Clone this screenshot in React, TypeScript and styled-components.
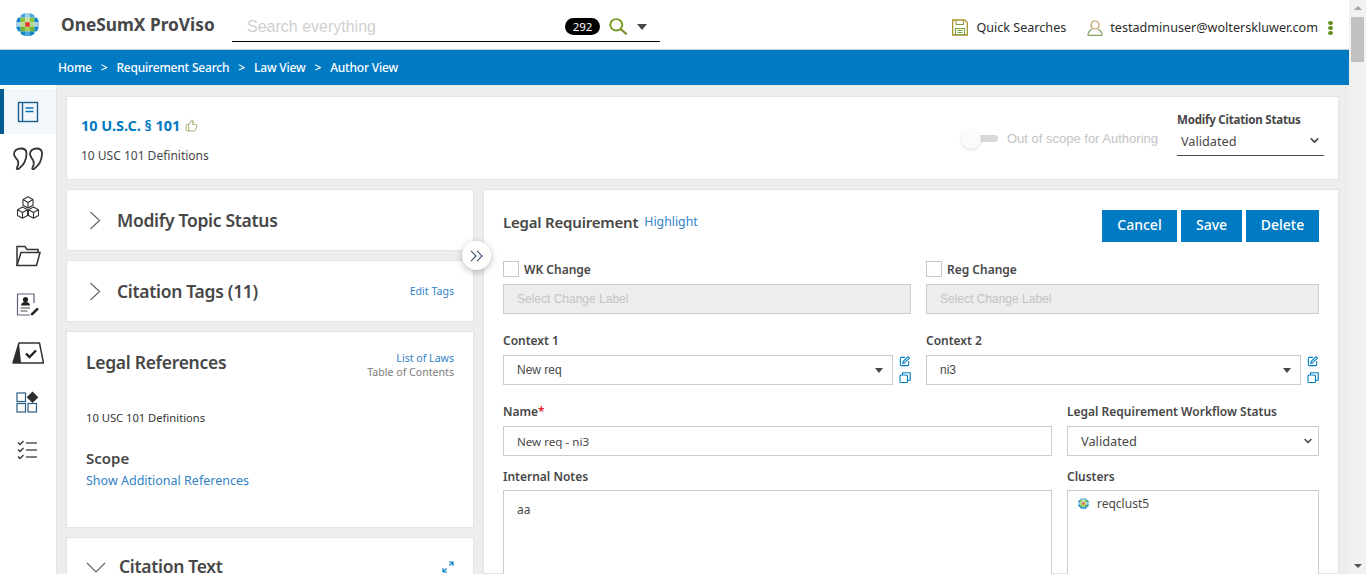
import * as React from 'react';
import styled, { createGlobalStyle } from 'styled-components';
import { ChevronDown, ThumbsUp, SquarePen } from 'lucide-react';

const GlobalStyle = createGlobalStyle`
html, body {
    margin: 0;
    height: 574px;
    overflow: hidden;
    background: #fff;
}
* { box-sizing: border-box; }
`

const UI_FONT = `"Noto Sans", "Open Sans", sans-serif`;
const ARIAL = `"Liberation Sans", Arial, sans-serif`;
const BLUE = '#007ac3';
const INK = '#474747';
const LINK = '#2f82c6';

const Frame = styled.div`
display: flex;
width: 1366px;
height: 574px;
overflow: hidden;
font-family: ${UI_FONT};
color: ${INK};
`

const Page = styled.div`
width: 1349px;
height: 574px;
display: flex;
flex-direction: column;
overflow: hidden;
`

const ScrollTrack = styled.div`
width: 17px;
height: 574px;
background: #f1f1f1;
display: flex;
flex-direction: column;
align-items: center;
padding-top: 6px;
`

const ScrollUp = styled.div`
width: 0;
height: 0;
border-left: 4px solid transparent;
border-right: 4px solid transparent;
border-bottom: 4px solid #a3a3a3;
`

const ScrollThumb = styled.div`
width: 13px;
height: 45px;
margin-top: 7px;
background: #c1c1c1;
`

const ScrollDown = styled.div`
width: 0;
height: 0;
margin-top: auto;
margin-bottom: 6px;
border-left: 4px solid transparent;
border-right: 4px solid transparent;
border-top: 4px solid #505050;
`

const TopBar = styled.header`
height: 50px;
flex: none;
background: #fff;
border-bottom: 1px solid #c8d0d6;
display: flex;
align-items: center;
padding-left: 16px;
`

const Brand = styled.div`
margin-left: 22px;
width: 171px;
font-size: 17.3px;
font-weight: 700;
color: ${INK};
white-space: nowrap;
`

const SearchBox = styled.div`
width: 428px;
height: 33px;
margin-top: 2px;
display: flex;
align-items: center;
border-bottom: 1px solid #000;
padding: 3px 0 0 15px;
`

const SearchHint = styled.span`
font-family: ${ARIAL};
font-size: 16px;
color: #cfcfcf;
flex: 1;
`

const CountBadge = styled.span`
width: 35px;
height: 17px;
border-radius: 9px;
background: #000;
color: #fff;
font-size: 11.5px;
line-height: 17px;
text-align: center;
`

const SearchIconWrap = styled.span`
display: flex;
margin-left: 9px;
`

const SearchCaret = styled.span`
width: 0;
height: 0;
margin: 0 13px 0 9px;
border-left: 5px solid transparent;
border-right: 5px solid transparent;
border-top: 6px solid #474747;
`

const TopActions = styled.div`
margin-left: auto;
display: flex;
align-items: center;
padding: 6px 16px 0 0;
font-size: 12.6px;
color: #2b2b2b;
`

const TopLink = styled.span<{ $gap?: number; $space: number }>`
display: flex;
align-items: center;
gap: ${p => p.$space}px;
margin-right: ${p => p.$gap ?? 0}px;
white-space: nowrap;
`

const KebabDot = styled.i`
display: block;
width: 5px;
height: 4px;
border-radius: 50%;
background: #5f8f1e;
`

const Kebab = styled.span`
display: flex;
flex-direction: column;
gap: 1px;
margin-left: 10px;
`

const Crumbs = styled.nav`
height: 35px;
flex: none;
background: ${BLUE};
color: #fff;
display: flex;
align-items: center;
padding-left: 58px;
font-size: 12px;
font-weight: 500;
letter-spacing: -0.2px;
white-space: nowrap;
`

const CrumbSep = styled.span`
margin: 0 9px;
`

const Body = styled.div`
flex: 1;
min-height: 0;
display: flex;
background: #ededed;
`

const Sidebar = styled.aside`
width: 57px;
flex: none;
background: #fff;
border-right: 1px solid #e4e4e4;
padding-top: 4px;
`

const SideItem = styled.div`
height: 48.5px;
display: flex;
align-items: center;
justify-content: center;
padding-right: 1px;
color: #333;
`

const ActiveSideItem = styled(SideItem)`
height: 45px;
margin-bottom: 1px;
background: #f2f7fb;
border-left: 4px solid #005b92;
padding-right: 5px;
`

const Content = styled.main`
flex: 1;
min-width: 0;
padding: 11px 10px 0 9px;
display: flex;
flex-direction: column;
gap: 9px;
overflow: hidden;
`

const Card = styled.section`
background: #fff;
border: 1px solid #e3e3e3;
`

const CitationCard = styled(Card)`
height: 84px;
flex: none;
display: flex;
padding: 18px 14px 0 14px;
`

const CitationInfo = styled.div`
flex: 1;
`

const CitationTitle = styled.div`
display: flex;
align-items: center;
gap: 5px;
font-size: 14.5px;
line-height: 20px;
font-weight: 700;
color: ${BLUE};
`

const CitationSub = styled.div`
margin-top: 12px;
font-size: 12px;
line-height: 18px;
color: #474747;
`

const ScopeToggle = styled.div`
display: flex;
align-items: center;
height: 46px;
font-family: ${ARIAL};
font-size: 13px;
color: #c4c4c4;
margin-right: 19px;
`

const ToggleTrack = styled.span`
position: relative;
display: block;
width: 26px;
height: 7px;
border-radius: 4px;
background: #d8d8d8;
margin-right: 9px;
`

const ToggleKnob = styled.span`
position: absolute;
left: -11px;
top: -6px;
width: 20px;
height: 20px;
border-radius: 50%;
background: #fbfbfb;
box-shadow: 0 1px 3px rgba(0, 0, 0, 0.15);
`

const StatusField = styled.div`
width: 147px;
margin-top: -3px;
`

const StatusLabel = styled.div`
font-size: 11.5px;
line-height: 16px;
font-weight: 700;
letter-spacing: -0.2px;
color: ${INK};
white-space: nowrap;
`

const StatusSelect = styled.div`
height: 28px;
display: flex;
align-items: center;
justify-content: space-between;
padding: 0 3px 2px 4px;
border-bottom: 1px solid #474b52;
font-size: 12.7px;
color: #474747;
`

const Columns = styled.div`
position: relative;
display: flex;
gap: 9px;
flex: 1;
min-height: 0;
`

const LeftCol = styled.div`
width: 408px;
flex: none;
display: flex;
flex-direction: column;
gap: 9px;
`

const Fold = styled(Card)`
height: 62px;
flex: none;
display: flex;
align-items: center;
padding: 0 19px 0 22px;
`

const FoldTitle = styled.h2`
margin: 0 0 0 16px;
flex: 1;
font-size: 17.5px;
font-weight: 600;
color: ${INK};
letter-spacing: -0.3px;
`

const SmallLink = styled.a<{ $muted?: boolean }>`
display: block;
font-size: 10.6px;
line-height: 14px;
color: ${p => (p.$muted ? '#7c7c7c' : LINK)};
text-align: right;
`

const RefsCard = styled(Card)`
height: 197px;
flex: none;
padding: 18px 19px 0 19px;
`

const RefsHead = styled.div`
display: flex;
justify-content: space-between;
`

const RefsLinks = styled.div`
margin-top: 1px;
`

const RefsTitle = styled.h2`
margin: 0;
font-size: 17.5px;
line-height: 24px;
font-weight: 600;
color: ${INK};
letter-spacing: -0.3px;
`

const RefsBody = styled.div`
margin-top: 30px;
font-size: 11.2px;
line-height: 18px;
color: #333;
`

const ScopeTitle = styled.h3`
margin: 21px 0 0;
font-size: 15px;
line-height: 20px;
font-weight: 600;
color: ${INK};
`

const ScopeLink = styled.a`
display: block;
margin-top: 4px;
font-size: 12.5px;
line-height: 18px;
color: ${LINK};
`

const TextCard = styled(Card)`
flex: 1;
min-height: 60px;
display: flex;
align-items: flex-start;
padding: 14px 19px 0 19px;
`

const TextChevron = styled.svg`
flex: none;
margin-top: 10px;
`

const ExpandIcon = styled.svg`
flex: none;
margin-top: 9px;
`

const TextTitle = styled.h2`
margin: 0 0 0 13px;
flex: 1;
font-size: 17.5px;
line-height: 28px;
font-weight: 600;
color: ${INK};
letter-spacing: -0.3px;
`

const CollapseBtn = styled.button`
position: absolute;
left: 396px;
top: 52px;
width: 29px;
height: 29px;
padding: 0;
display: flex;
align-items: center;
justify-content: center;
border: none;
border-radius: 50%;
background: #fff;
box-shadow: 0 2px 7px rgba(0, 0, 0, 0.25);
`

const FormCard = styled(Card)`
flex: 1;
min-width: 0;
padding: 20px 19px 0 19px;
`

const FormHead = styled.div`
display: flex;
align-items: flex-start;
height: 51px;
`

const FormTitle = styled.h2`
margin: 2px 6px 0 0;
font-size: 15px;
line-height: 20px;
font-weight: 600;
color: ${INK};
letter-spacing: -0.2px;
`

const HighlightLink = styled.a`
margin-top: 2px;
font-size: 12.3px;
line-height: 20px;
color: ${LINK};
`

const Actions = styled.div`
margin-left: auto;
display: flex;
gap: 4px;
`

const ActionButton = styled.button<{ $w: number }>`
width: ${p => p.$w}px;
height: 32px;
padding: 0 0 3px;
border: none;
background: ${BLUE};
color: #fff;
font-family: ${UI_FONT};
font-size: 14px;
font-weight: 500;
`

const Grid = styled.div<{ $cols: string; $mb?: number }>`
display: grid;
grid-template-columns: ${p => p.$cols};
column-gap: 15px;
margin-bottom: ${p => p.$mb ?? 0}px;
`

const CheckRow = styled.label`
display: flex;
align-items: center;
gap: 5px;
height: 16px;
margin-bottom: 7px;
font-size: 12px;
font-weight: 600;
color: ${INK};
`

const CheckBox = styled.span`
width: 16px;
height: 16px;
border: 1px solid #c8c8c8;
background: #fff;
`

const DisabledSelect = styled.div`
height: 30px;
display: flex;
align-items: center;
padding-left: 13px;
background: #ededed;
border: 1px solid #cccccc;
font-family: ${ARIAL};
font-size: 12px;
color: #c4c4c4;
`

const FieldLabel = styled.div<{ $below?: number }>`
height: 15px;
line-height: 15px;
margin-bottom: ${p => p.$below ?? 7}px;
font-size: 12px;
font-weight: 600;
color: ${INK};
white-space: nowrap;
`

const Star = styled.span`
color: #e5202e;
`

const SelectRow = styled.div`
display: flex;
gap: 6px;
`

const InputBox = styled.div<{ $font?: string; $size?: number; $right?: number }>`
flex: 1;
height: 30px;
display: flex;
align-items: center;
justify-content: space-between;
padding: 0 ${p => p.$right ?? 8}px 0 13px;
border: 1px solid #cccccc;
background: #fff;
font-family: ${p => p.$font ?? UI_FONT};
font-size: ${p => p.$size ?? 12}px;
color: #474747;
`

const DownTriangle = styled.span`
width: 0;
height: 0;
margin-right: 1px;
border-left: 4px solid transparent;
border-right: 4px solid transparent;
border-top: 5px solid #474747;
`

const RowTools = styled.div`
width: 12px;
display: flex;
flex-direction: column;
gap: 5px;
padding-top: 1px;
color: ${BLUE};
`

const AreaBox = styled.div`
height: 120px;
padding: 11px 13px;
border: 1px solid #cccccc;
background: #fff;
font-size: 12px;
line-height: 16px;
color: #474747;
`

const ClusterItem = styled.div`
display: flex;
align-items: center;
gap: 8px;
height: 24px;
padding-left: 10px;
font-size: 12px;
color: #474747;
`

const ClusterBox = styled.div`
height: 120px;
border: 1px solid #cccccc;
background: #fff;
`

const GLOBE_CELLS: [number, number, string][] = [
    [1, 0, '#4aa5d8'], [2, 0, '#9fd0ea'], [3, 0, '#4aa5d8'],
    [0, 1, '#0f87c9'], [1, 1, '#8cc63f'], [2, 1, '#c9e2a0'], [3, 1, '#8cc63f'], [4, 1, '#0f87c9'],
    [0, 2, '#a9cfe0'], [1, 2, '#b7d98a'], [2, 2, '#e8362d'], [3, 2, '#b7d98a'], [4, 2, '#a9cfe0'],
    [0, 3, '#0f87c9'], [1, 3, '#75b62f'], [2, 3, '#a5d060'], [3, 3, '#75b62f'], [4, 3, '#0f87c9'],
    [1, 4, '#0f87c9'], [2, 4, '#4aa5d8'], [3, 4, '#0f87c9'],
];

function Globe({ size, id }: { size: number; id: string }) {
    return <svg width={size} height={size} viewBox="0 0 23 23">
        <defs>
            <clipPath id={id}><circle cx="11.500" cy="11.500" r="11.500" /></clipPath>
        </defs>
        <g clipPath={`url(#${id})`}>
            {GLOBE_CELLS.map(([x, y, fill]) => <rect key={`${x}-${y}`} x={x * 4.6} y={y * 4.6} width="4.7" height="4.7" fill={fill} />)}
        </g>
    </svg>
}

function SearchGlyph() {
    return <svg width="19" height="17" viewBox="0 0 19 17" fill="none" strokeWidth="1.900">
        <ellipse cx="7.300" cy="6.800" rx="6" ry="5.700" stroke="#6f9a1f" />
        <path d="M11.500 11 17.800 16.300" stroke="#7a8f22" strokeWidth="2.200" />
    </svg>
}

function SaveGlyph() {
    return <svg width="16" height="17" viewBox="0 0 16 17" fill="none">
        <path d="M.7 1h12l2.600 2.600V16H.7z" stroke="#a8952a" strokeWidth="1.300" />
        <path d="M4 1.500v4h7.500v-4" stroke="#8a9a3a" strokeWidth="1.100" />
        <path d="M3.500 9.500h9v6h-9zM5.500 11.500h5M5.500 13.500h5" stroke="#7fa63c" strokeWidth="1.100" />
    </svg>
}

function UserGlyph() {
    return <svg width="16" height="16" viewBox="0 0 16 16" fill="none" strokeWidth="1.200">
        <circle cx="8" cy="5" r="4" stroke="#b89a5a" />
        <path d="M.8 15.400c.4-3.400 2.400-5.400 4.200-6.200M15.200 15.400c-.4-3.400-2.400-5.400-4.200-6.200M.8 15.400h14.400" stroke="#7fa05a" />
    </svg>
}

function RightChevron() {
    return <svg width="12" height="19" viewBox="0 0 12 19" fill="none" stroke="#666" strokeWidth="1.200">
        <path d="M1.500 1 10.500 9.500 1.500 18" />
    </svg>
}

function BookIcon() {
    return <svg width="22" height="22" viewBox="0 0 22 22" fill="none" stroke="#1d5f8c" strokeWidth="1.400">
        <rect x="1.500" y="1.500" width="19" height="19" />
        <path d="M5.500 1.500v19" />
        <path d="M8.500 7h8M8.500 10.500h8" strokeWidth="1.600" stroke="#0a74b8" />
    </svg>
}

function QuoteIcon() {
    return <svg width="30" height="24" viewBox="0 0 30 24" fill="none" stroke="#333" strokeWidth="1.800">
        <path d="M8 1.500c3.500 0 5.500 2.200 5.500 5 0 6-3.200 12-8 15.500-1.600.6-2.200-.5-1.500-1.600 1.400-2.400 1.700-5 .6-7.200C2.500 11 1 9 1 6.800 1 3.800 4 1.500 8 1.500z" />
        <path d="M23.500 1.500c3.500 0 5.500 2.200 5.500 5 0 6-3.200 12-8 15.500-1.600.6-2.200-.5-1.500-1.600 1.400-2.400 1.700-5 .6-7.200-1.600-2.200-3.100-4.200-3.100-6.400 0-3 3-5.300 6.500-5.300z" />
    </svg>
}

function CubesIcon() {
    const cube = 'M0 2.800 5 0l5 2.800v5.600L5 11.200 0 8.400zM0 2.800l5 2.800 5-2.800M5 5.600v5.600';
    return <svg width="24" height="23" viewBox="0 0 24 23" fill="none" stroke="#333" strokeWidth="1.100" strokeLinejoin="round">
        <path d={cube} transform="translate(7 .8)" />
        <path d={cube} transform="translate(1.500 11)" />
        <path d={cube} transform="translate(12.500 11)" />
    </svg>
}

function FolderIcon() {
    return <svg width="26" height="22" viewBox="0 0 26 22" fill="none" stroke="#333" strokeWidth="1.500">
        <path d="M2 20.500V1.500h8l2 3h11v3" />
        <path d="M2 20.500 6 7.500h19l-3.500 13z" />
    </svg>
}

function ProfileIcon() {
    return <svg width="24" height="23" viewBox="0 0 24 23" fill="none">
        <path d="M18 10V1H1.500v21H14" stroke="#6b5a7a" strokeWidth="1.200" />
        <circle cx="9.500" cy="6.500" r="2.600" fill="#222" />
        <path d="M5 12.500c0-2.500 2-3.500 4.500-3.500s4.500 1 4.500 3.500z" fill="#222" />
        <path d="M4.500 15h9.500M4.500 18h7" stroke="#888" strokeWidth="1.300" />
        <path d="M15 20.500l6-6 1.800 1.800-6 6h-2z" fill="#222" />
    </svg>
}

function BoardIcon() {
    return <svg width="32" height="24" viewBox="0 0 32 24">
        <path d="M7 2h20.500L31.500 22H1z" fill="#fff" stroke="#333" strokeWidth="1.500" strokeLinejoin="round" />
        <path d="M7 2 1 22h8z" fill="#2d2d2d" />
        <path d="M14 12.500l3.500 3.500 6.500-6.500" fill="none" stroke="#222" strokeWidth="2.400" />
    </svg>
}

function TilesIcon() {
    return <svg width="23" height="22" viewBox="0 0 23 22" fill="none" stroke="#555" strokeWidth="1.200">
        <rect x="1" y="2" width="8.500" height="8.500" stroke="#2c5f86" />
        <rect x="1" y="12.500" width="8.500" height="8.500" stroke="#2c5f86" />
        <rect x="12" y="12.500" width="8.500" height="8.500" stroke="#2c5f86" />
        <path d="M16.500.5l5.800 5.800-5.800 5.800-5.800-5.800z" fill="#2d2d2d" stroke="none" />
    </svg>
}

function ChecklistIcon() {
    return <svg width="21" height="20" viewBox="0 0 21 20" fill="none" stroke="#333" strokeWidth="1.300">
        <path d="M1 2.500 3 4.500 6.500 1M1 9.500 3 11.500 6.500 8M1 16.500 3 18.500 6.500 15" />
        <path d="M9 3h11M9 10h11M9 17h11" stroke="#555" strokeWidth="1.500" />
    </svg>
}

function ToolIcons() {
    return <RowTools>
        <SquarePen size={11} strokeWidth={2.400} />
        <svg width="12" height="11" viewBox="0 0 12 11" fill="none" stroke="currentColor" strokeWidth="1.100">
            <rect x="1" y="3" width="7.500" height="7.500" rx="1" />
            <path d="M3.500 3V.8h7.700v7.400H8.500" />
        </svg>
    </RowTools>
}

export default function App() {
    return <Frame>
        <GlobalStyle />
        <Page>
            <TopBar>
                <Globe size={23} id="brand-globe" />
                <Brand>OneSumX ProViso</Brand>
                <SearchBox>
                    <SearchHint>Search everything</SearchHint>
                    <CountBadge>292</CountBadge>
                    <SearchIconWrap><SearchGlyph /></SearchIconWrap>
                    <SearchCaret />
                </SearchBox>
                <TopActions>
                    <TopLink $gap={21} $space={8}>
                        <SaveGlyph />
                        Quick Searches
                    </TopLink>
                    <TopLink $space={7}>
                        <UserGlyph />
                        testadminuser@wolterskluwer.com
                    </TopLink>
                    <Kebab><KebabDot /><KebabDot /><KebabDot /></Kebab>
                </TopActions>
            </TopBar>
            <Crumbs>
                Home<CrumbSep>&gt;</CrumbSep>Requirement Search<CrumbSep>&gt;</CrumbSep>Law View<CrumbSep>&gt;</CrumbSep>Author View
            </Crumbs>
            <Body>
                <Sidebar>
                    <ActiveSideItem><BookIcon /></ActiveSideItem>
                    <SideItem><QuoteIcon /></SideItem>
                    <SideItem><CubesIcon /></SideItem>
                    <SideItem><FolderIcon /></SideItem>
                    <SideItem><ProfileIcon /></SideItem>
                    <SideItem><BoardIcon /></SideItem>
                    <SideItem><TilesIcon /></SideItem>
                    <SideItem><ChecklistIcon /></SideItem>
                </Sidebar>
                <Content>
                    <CitationCard>
                        <CitationInfo>
                            <CitationTitle>10 U.S.C. § 101 <ThumbsUp size={13} color="#8a9a4a" strokeWidth={1.400} /></CitationTitle>
                            <CitationSub>10 USC 101 Definitions</CitationSub>
                        </CitationInfo>
                        <ScopeToggle>
                            <ToggleTrack><ToggleKnob /></ToggleTrack>
                            Out of scope for Authoring
                        </ScopeToggle>
                        <StatusField>
                            <StatusLabel>Modify Citation Status</StatusLabel>
                            <StatusSelect>Validated <ChevronDown size={13} strokeWidth={3} /></StatusSelect>
                        </StatusField>
                    </CitationCard>
                    <Columns>
                        <LeftCol>
                            <Fold>
                                <RightChevron />
                                <FoldTitle>Modify Topic Status</FoldTitle>
                            </Fold>
                            <Fold>
                                <RightChevron />
                                <FoldTitle>Citation Tags (11)</FoldTitle>
                                <SmallLink>Edit Tags</SmallLink>
                            </Fold>
                            <RefsCard>
                                <RefsHead>
                                    <RefsTitle>Legal References</RefsTitle>
                                    <RefsLinks>
                                        <SmallLink>List of Laws</SmallLink>
                                        <SmallLink $muted>Table of Contents</SmallLink>
                                    </RefsLinks>
                                </RefsHead>
                                <RefsBody>10 USC 101 Definitions</RefsBody>
                                <ScopeTitle>Scope</ScopeTitle>
                                <ScopeLink>Show Additional References</ScopeLink>
                            </RefsCard>
                            <TextCard>
                                <TextChevron width="20" height="11" viewBox="0 0 20 11" fill="none" stroke="#666" strokeWidth="1.200">
                                    <path d="M1 1 10 10 19 1" />
                                </TextChevron>
                                <TextTitle>Citation Text</TextTitle>
                                <ExpandIcon width="12" height="12" viewBox="0 0 12 12" fill="none" stroke={BLUE} strokeWidth="1.100">
                                    <path d="M7 1h4v4M11 1 7.500 4.500M5 11H1V7M1 11l3.500-3.500" />
                                </ExpandIcon>
                            </TextCard>
                        </LeftCol>
                        <CollapseBtn>
                            <svg width="13" height="12" viewBox="0 0 13 12" fill="none" stroke="#34506f" strokeWidth="1.100">
                                <path d="M1 .8 6 6 1 11.200M7 .8 12 6 7 11.200" />
                            </svg>
                        </CollapseBtn>
                        <FormCard>
                            <FormHead>
                                <FormTitle>Legal Requirement</FormTitle>
                                <HighlightLink>Highlight</HighlightLink>
                                <Actions>
                                    <ActionButton $w={75}>Cancel</ActionButton>
                                    <ActionButton $w={61}>Save</ActionButton>
                                    <ActionButton $w={73}>Delete</ActionButton>
                                </Actions>
                            </FormHead>
                            <Grid $cols="408px 393px" $mb={19}>
                                <div>
                                    <CheckRow><CheckBox />WK Change</CheckRow>
                                    <DisabledSelect>Select Change Label</DisabledSelect>
                                </div>
                                <div>
                                    <CheckRow><CheckBox />Reg Change</CheckRow>
                                    <DisabledSelect>Select Change Label</DisabledSelect>
                                </div>
                            </Grid>
                            <Grid $cols="408px 393px" $mb={19}>
                                <div>
                                    <FieldLabel>Context 1</FieldLabel>
                                    <SelectRow>
                                        <InputBox $font={ARIAL}>New req<DownTriangle /></InputBox>
                                        <ToolIcons />
                                    </SelectRow>
                                </div>
                                <div>
                                    <FieldLabel>Context 2</FieldLabel>
                                    <SelectRow>
                                        <InputBox $font={ARIAL}>ni3<DownTriangle /></InputBox>
                                        <ToolIcons />
                                    </SelectRow>
                                </div>
                            </Grid>
                            <Grid $cols="549px 252px" $mb={13}>
                                <div>
                                    <FieldLabel>Name<Star>*</Star></FieldLabel>
                                    <InputBox $size={11.600}>New req - ni3</InputBox>
                                </div>
                                <div>
                                    <FieldLabel>Legal Requirement Workflow Status</FieldLabel>
                                    <InputBox $size={12.800} $right={4}>Validated <ChevronDown size={12} strokeWidth={3} /></InputBox>
                                </div>
                            </Grid>
                            <Grid $cols="549px 252px">
                                <div>
                                    <FieldLabel $below={6}>Internal Notes</FieldLabel>
                                    <AreaBox>aa</AreaBox>
                                </div>
                                <div>
                                    <FieldLabel $below={6}>Clusters</FieldLabel>
                                    <ClusterBox>
                                        <ClusterItem><Globe size={11} id="cluster-globe" />reqclust5</ClusterItem>
                                    </ClusterBox>
                                </div>
                            </Grid>
                        </FormCard>
                    </Columns>
                </Content>
            </Body>
        </Page>
        <ScrollTrack>
            <ScrollUp />
            <ScrollThumb />
            <ScrollDown />
        </ScrollTrack>
    </Frame>
}
